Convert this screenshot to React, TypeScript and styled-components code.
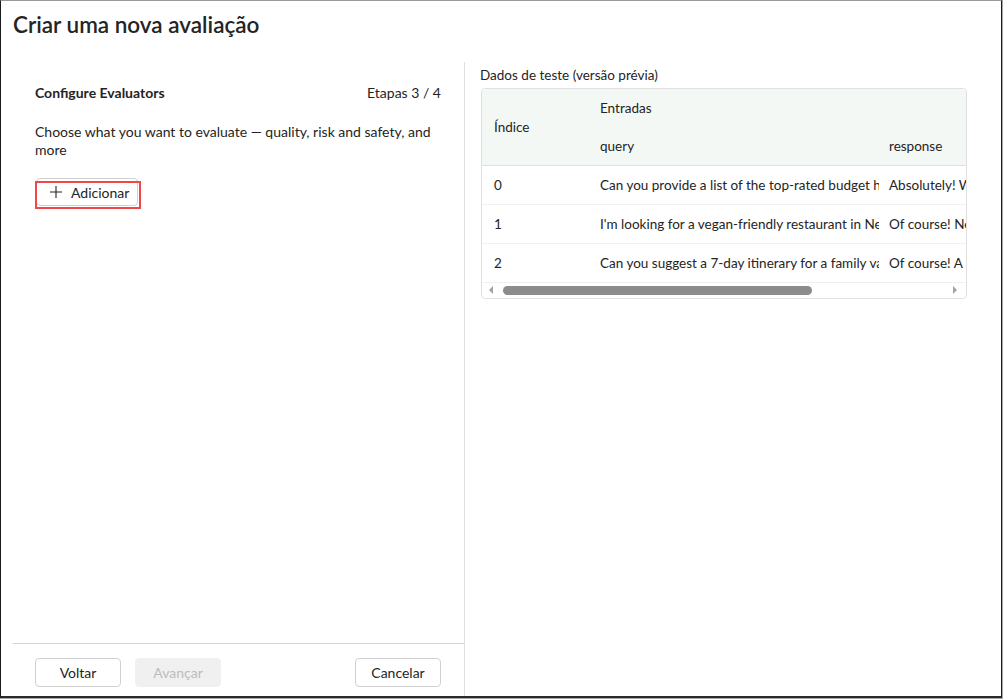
import { Fragment } from 'react';
import styled, { createGlobalStyle } from 'styled-components';

const GlobalStyle = createGlobalStyle`
  html, body {
    margin: 0;
    padding: 0;
    background: #a8a8a8;
  }
  body {
    font-family: Lato, "Noto Sans", sans-serif;
    color: #242424;
    -webkit-font-smoothing: antialiased;
  }
  * {
    box-sizing: border-box;
  }
`;

const Frame = styled.div`
  width: 1002px;
  height: 698px;
  display: flex;
  flex-direction: column;
  border-left: 1px solid #1b1b1b;
  border-right: 1px solid #1b1b1b;
  border-top: 1px solid #9a9a9a;
  border-bottom: 2px solid #2a2a2a;
  background: #fff;
  overflow: hidden;
`;

const Header = styled.header`
  height: 61px;
  flex-shrink: 0;
  padding: 10px 0 0 12px;
`;

const Title = styled.h1`
  margin: 0;
  font-size: 22.5px;
  line-height: 28px;
  font-weight: 600;
  color: #242424;
`;

const Body = styled.div`
  flex: 1;
  display: flex;
  min-height: 0;
`;

const LeftPanel = styled.section`
  width: 464px;
  flex-shrink: 0;
  display: flex;
  flex-direction: column;
  border-right: 1px solid #e0e0e0;
`;

const LeftContent = styled.div`
  flex: 1;
  padding: 22px 23px 0 34px;
`;

const StepRow = styled.div`
  display: flex;
  justify-content: space-between;
  align-items: center;
  font-size: 14px;
  line-height: 18px;
`;

const StepTitle = styled.span`
  font-weight: 700;
`;

const StepCount = styled.span`
  font-weight: 400;
`;

const Description = styled.p`
  margin: 21px 0 0;
  font-size: 14px;
  line-height: 18px;
`;

const AddWrap = styled.div`
  position: relative;
  display: inline-block;
  margin-top: 19px;

  &::after {
    content: '';
    position: absolute;
    top: 3px;
    left: 0;
    right: -3px;
    bottom: -3px;
    border: 2px solid #f04848;
    pointer-events: none;
  }
`;

const AddButton = styled.button`
  display: flex;
  align-items: center;
  gap: 8px;
  height: 28px;
  padding: 0 8px 0 12px;
  margin-left: 1px;
  border: 1px solid #d1d1d1;
  border-radius: 4px;
  background: #fff;
  font-family: inherit;
  font-size: 14px;
  color: #242424;
`;

const Footer = styled.footer`
  margin-left: 12px;
  border-top: 1px solid #d6d6d6;
  padding: 14px 23px 9px 22px;
  display: flex;
  gap: 14px;
`;

const FooterButton = styled.button<{ $disabled?: boolean }>`
  width: 86px;
  height: 29px;
  border: 1px solid ${(p) => (p.$disabled ? '#f0f0f0' : '#d1d1d1')};
  border-radius: 4px;
  background: ${(p) => (p.$disabled ? '#f0f0f0' : '#fff')};
  color: ${(p) => (p.$disabled ? '#bdbdbd' : '#242424')};
  font-family: inherit;
  font-size: 14px;
`;

const Spacer = styled.div`
  flex: 1;
`;

const RightPanel = styled.section`
  flex: 1;
  padding: 5px 35px 0 15px;
`;

const DataLabel = styled.div`
  font-size: 13.5px;
  line-height: 16px;
  margin-bottom: 5px;
`;

const TableBox = styled.div`
  margin-left: 1px;
  border: 1px solid #e0e0e0;
  border-radius: 4px;
  overflow: hidden;
  width: 486px;
`;

const Grid = styled.div`
  display: grid;
  grid-template-columns: 108px 289px 1fr;
  font-size: 13.5px;
`;

const HeadCell = styled.div<{ $rows?: boolean }>`
  background: #f4f8f5;
  display: flex;
  align-items: center;
  height: 38px;
  padding-left: 10px;
  white-space: nowrap;
  overflow: hidden;
  ${(p) => p.$rows && 'grid-row: span 2; height: 76px; padding-left: 12px;'}
`;

const HeadDivider = styled.div`
  grid-column: 1 / -1;
  height: 1px;
  background: #e0e0e0;
`;

const Cell = styled.div<{ $first?: boolean }>`
  height: 39px;
  display: flex;
  align-items: center;
  padding-left: ${(p) => (p.$first ? '12px' : '10px')};
  border-bottom: 1px solid #f0f0f0;
  white-space: nowrap;
  overflow: hidden;
`;

const ScrollBar = styled.div`
  height: 15px;
  display: flex;
  align-items: center;
  padding: 0 8px 1px 6px;
`;

const Track = styled.div`
  flex: 1;
  height: 9px;
  margin: 0 8px 0 9px;
`;

const Thumb = styled.div`
  height: 9px;
  border-radius: 5px;
  background: #8c8c8c;
`;

const Arrow = ({ dir }: { dir: 'left' | 'right' }) => (
  <svg width="6" height="8" viewBox="0 0 6 8">
    <path d={dir === 'left' ? 'M5 0 L1 4 L5 8 Z' : 'M1 0 L5 4 L1 8 Z'} fill="#a3a3a3" />
  </svg>
);

const rows = [
  {
    query: 'Can you provide a list of the top-rated budget hotels in Paris?',
    response: 'Absolutely! Within budget, here are some options',
  },
  {
    query: "I'm looking for a vegan-friendly restaurant in New York City.",
    response: 'Of course! New York City has many options',
  },
  {
    query: 'Can you suggest a 7-day itinerary for a family vacation in Italy?',
    response: 'Of course! A 7-day itinerary for a family',
  },
];

export default function App() {
  return (
    <>
      <GlobalStyle />
      <Frame>
        <Header>
          <Title>Criar uma nova avaliação</Title>
        </Header>
        <Body>
          <LeftPanel>
            <LeftContent>
              <StepRow>
                <StepTitle>Configure Evaluators</StepTitle>
                <StepCount>Etapas 3 / 4</StepCount>
              </StepRow>
              <Description>
                Choose what you want to evaluate — quality, risk and safety, and more
              </Description>
              <AddWrap>
                <AddButton>
                  <svg width="14" height="14" viewBox="0 0 14 14">
                    <path d="M7 1 V13 M1 7 H13" stroke="#242424" strokeWidth="1.1" />
                  </svg>
                  Adicionar
                </AddButton>
              </AddWrap>
            </LeftContent>
            <Footer>
              <FooterButton>Voltar</FooterButton>
              <FooterButton $disabled>Avançar</FooterButton>
              <Spacer />
              <FooterButton>Cancelar</FooterButton>
            </Footer>
          </LeftPanel>
          <RightPanel>
            <DataLabel>Dados de teste (versão prévia)</DataLabel>
            <TableBox>
              <Grid>
                <HeadCell $rows>Índice</HeadCell>
                <HeadCell>Entradas</HeadCell>
                <HeadCell />
                <HeadCell>query</HeadCell>
                <HeadCell>response</HeadCell>
                <HeadDivider />
                {rows.map((r, i) => (
                  <Fragment key={i}>
                    <Cell $first>{i}</Cell>
                    <Cell>{r.query}</Cell>
                    <Cell>{r.response}</Cell>
                  </Fragment>
                ))}
              </Grid>
              <ScrollBar>
                <Arrow dir="left" />
                <Track>
                  <Thumb style={{ width: `${(312 / 446) * 100}%` }} />
                </Track>
                <Arrow dir="right" />
              </ScrollBar>
            </TableBox>
          </RightPanel>
        </Body>
      </Frame>
    </>
  );
}
